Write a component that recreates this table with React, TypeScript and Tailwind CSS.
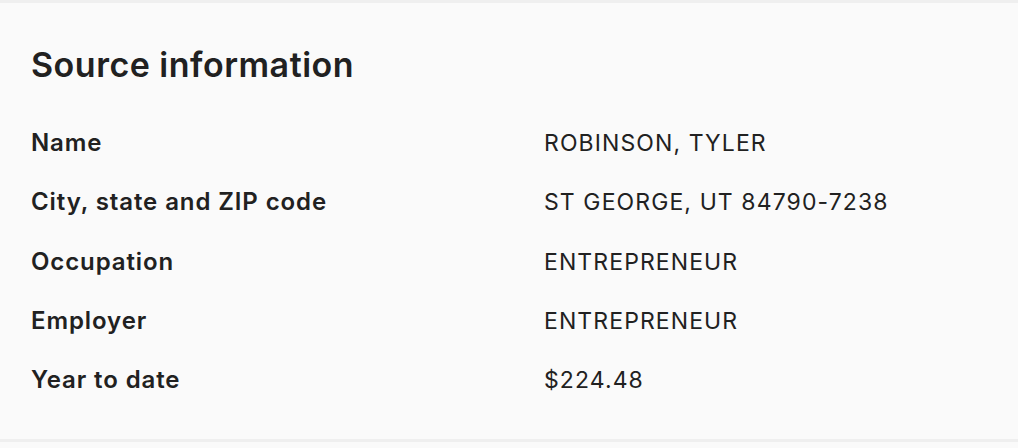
import React from 'react';

const rows = [
  { label: 'Name', value: 'ROBINSON, TYLER' },
  { label: 'City, state and ZIP code', value: 'ST GEORGE, UT 84790-7238' },
  { label: 'Occupation', value: 'ENTREPRENEUR' },
  { label: 'Employer', value: 'ENTREPRENEUR' },
  { label: 'Year to date', value: '$224.48' },
];

export default function App() {
  return (
    <div className="w-[1018px] h-[448px] bg-[#fafafa] font-['Inter',sans-serif] text-[#212121]">
      <div className="h-[3px] bg-[#efefef]" />
      <section className="h-[436px] px-[31px] pt-[42px]">
        <h2 className="text-[34px] font-semibold leading-[40px] tracking-[0.5px]">Source information</h2>
        <dl className="mt-[44px] flex flex-col">
          {rows.map((row) => (
            <div key={row.label} className="flex h-[59.25px] items-start">
              <dt className="w-[513px] shrink-0 text-[24px] font-semibold leading-[28px] tracking-[0.9px]">{row.label}</dt>
              <dd className="text-[23px] leading-[28px] tracking-[1.1px]">{row.value}</dd>
            </div>
          ))}
        </dl>
      </section>
      <div className="h-[3px] bg-[#efefef]" />
    </div>
  );
}
